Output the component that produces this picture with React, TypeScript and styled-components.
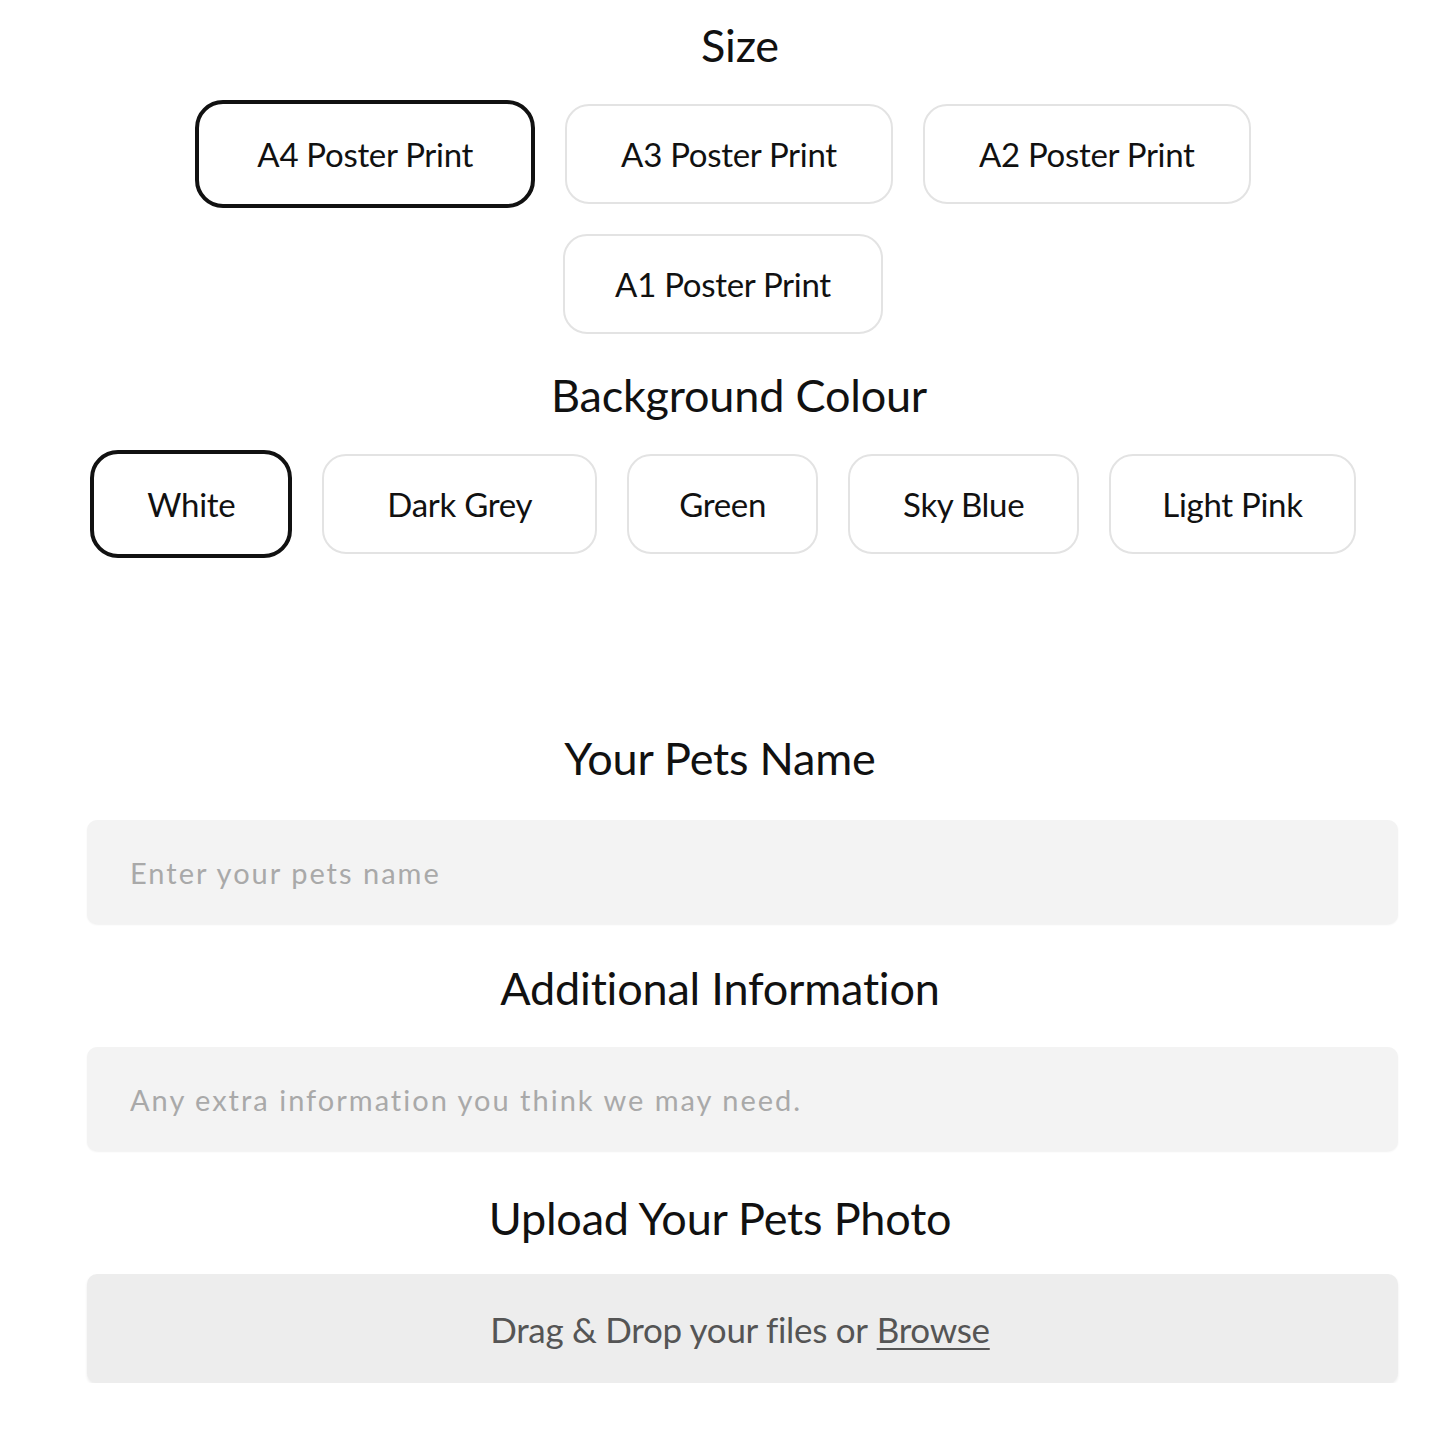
import React from "react";
import styled, { createGlobalStyle } from "styled-components";

const Global = createGlobalStyle`
  html, body { margin: 0; padding: 0; background: #ffffff; }
  body { font-family: Lato, "Open Sans", sans-serif; color: #111; }
  * { box-sizing: border-box; }
`;

const Page = styled.div`
  width: 1440px;
  padding-top: 15px;
  display: flex;
  flex-direction: column;
`;

const Heading = styled.h2<{ $mt?: number; $shift?: number }>`
  margin: ${(p) => p.$mt ?? 0}px 0 0 ${(p) => p.$shift ?? 0}px;
  height: 60px;
  line-height: 60px;
  text-align: center;
  font-family: Lato, sans-serif;
  font-weight: 400;
  font-size: 45px;
  color: #111;
  letter-spacing: -0.2px;
`;

const OptionGroup = styled.div<{ $mt: number; $width: number }>`
  margin: ${(p) => p.$mt}px auto 0;
  width: ${(p) => p.$width}px;
  display: flex;
  flex-wrap: wrap;
  justify-content: center;
  align-items: center;
  column-gap: 30px;
  row-gap: 26px;
  transform: translateX(3px);
`;

const Option = styled.button<{ $selected?: boolean; $pad: number }>`
  height: ${(p) => (p.$selected ? 108 : 100)}px;
  padding: 0 ${(p) => p.$pad}px;
  background: #fff;
  border: ${(p) => (p.$selected ? "4px solid #111" : "2px solid #e3e3e3")};
  border-radius: ${(p) => (p.$selected ? 28 : 24)}px;
  font-family: Lato, sans-serif;
  font-size: 33px;
  font-weight: 400;
  color: #111;
  letter-spacing: -0.3px;
  cursor: pointer;
  line-height: 1;
`;

const Field = styled.div<{ $mt: number }>`
  margin: ${(p) => p.$mt}px 42px 0 87px;
`;

const TextInput = styled.input`
  width: 100%;
  height: 104px;
  border: none;
  border-radius: 10px;
  background: #f3f3f3;
  box-shadow: 0 1px 2px rgba(0, 0, 0, 0.06);
  padding: 0 43px;
  font-family: Lato, sans-serif;
  font-size: 29px;
  letter-spacing: 2px;
  color: #333;
  outline: none;
  &::placeholder {
    color: #a9a9a9;
  }
`;

const DropZone = styled.div`
  height: 109px;
  border-radius: 10px;
  background: #ededed;
  box-shadow: 0 2px 3px rgba(0, 0, 0, 0.08);
  display: flex;
  align-items: center;
  justify-content: center;
  padding-right: 5px;
  font-family: Lato, sans-serif;
  font-size: 35px;
  letter-spacing: -0.3px;
  color: #555;
`;

const BrowseLink = styled.span`
  margin-left: 9px;
  text-decoration: underline;
  text-decoration-thickness: 2px;
  text-underline-offset: 5px;
  cursor: pointer;
`;

const sizes = [
  { label: "A4 Poster Print", pad: 58, selected: true },
  { label: "A3 Poster Print", pad: 54 },
  { label: "A2 Poster Print", pad: 54 },
  { label: "A1 Poster Print", pad: 50 },
];

const colours = [
  { label: "White", pad: 53, selected: true },
  { label: "Dark Grey", pad: 63 },
  { label: "Green", pad: 50 },
  { label: "Sky Blue", pad: 53 },
  { label: "Light Pink", pad: 51 },
];

export default function App() {
  return (
    <Page>
      <Global />
      <Heading $shift={40}>Size</Heading>
      <OptionGroup $mt={25} $width={1080}>
        {sizes.map((s) => (
          <Option key={s.label} $selected={s.selected} $pad={s.pad}>
            {s.label}
          </Option>
        ))}
      </OptionGroup>
      <Heading $mt={31} $shift={38}>Background Colour</Heading>
      <OptionGroup $mt={25} $width={1300}>
        {colours.map((c) => (
          <Option key={c.label} $selected={c.selected} $pad={c.pad}>
            {c.label}
          </Option>
        ))}
      </OptionGroup>
      <Heading $mt={170}>Your Pets Name</Heading>
      <Field $mt={32}>
        <TextInput placeholder="Enter your pets name" />
      </Field>
      <Heading $mt={34}>Additional Information</Heading>
      <Field $mt={29}>
        <TextInput placeholder="Any extra information you think we may need." />
      </Field>
      <Heading $mt={37}>Upload Your Pets Photo</Heading>
      <Field $mt={26}>
        <DropZone>
          Drag &amp; Drop your files or <BrowseLink>Browse</BrowseLink>
        </DropZone>
      </Field>
    </Page>
  );
}
